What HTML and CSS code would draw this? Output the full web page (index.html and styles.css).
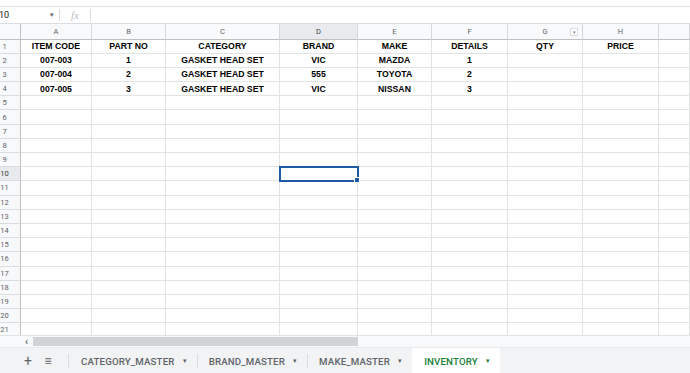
FILE: index.html
```html
<!DOCTYPE html>
<html lang="en">
<head>
  <meta charset="UTF-8" />
  <title>INVENTORY - Sheet</title>
  <link rel="stylesheet" href="styles.css">
</head>
<body>
  <div class="topstrip"></div>

  <div class="formula-bar">
    <div class="name-box">
      <span class="cell-ref">10</span>
      <span class="caret">&#9662;</span>
    </div>
    <div class="fx">fx</div>
    <div class="formula-input"></div>
  </div>

  <div class="grid-wrap">
    <div class="sheet" id="sheet"></div>
  </div>

  <div class="hscroll">
    <span class="scroll-arrow">&lsaquo;</span>
    <div class="scroll-track"><div class="scroll-thumb"></div></div>
  </div>

  <div class="tabbar">
    <span class="tab-btn">+</span>
    <span class="tab-btn menu">&#8801;</span>
    <span class="tab-sep"></span>
    <div class="tab"><span>CATEGORY_MASTER</span><span class="tab-caret">&#9662;</span></div>
    <div class="tab"><span>BRAND_MASTER</span><span class="tab-caret">&#9662;</span></div>
    <div class="tab"><span>MAKE_MASTER</span><span class="tab-caret">&#9662;</span></div>
    <div class="tab active"><span>INVENTORY</span><span class="tab-caret">&#9662;</span></div>
  </div>

  <script>
    const cols = ['A','B','C','D','E','F','G','H',''];
    const data = [
      ['ITEM CODE','PART NO','CATEGORY','BRAND','MAKE','DETAILS','QTY','PRICE'],
      ['007-003','1','GASKET HEAD SET','VIC','MAZDA','1','',''],
      ['007-004','2','GASKET HEAD SET','555','TOYOTA','2','',''],
      ['007-005','3','GASKET HEAD SET','VIC','NISSAN','3','','']
    ];
    const rowCount = 21;
    const selRow = 10, selCol = 3; // D10

    const sheet = document.getElementById('sheet');
    let html = '<div class="corner"></div>';
    cols.forEach((c, i) => {
      const cls = i === selCol ? 'col-head picked' : 'col-head';
      const filter = c === 'G' ? '<span class="filter">&#9662;</span>' : '';
      html += `<div class="${cls}">${c}${filter}</div>`;
    });
    for (let r = 1; r <= rowCount; r++) {
      const cls = r === selRow ? 'row-head picked' : 'row-head';
      html += `<div class="${cls}"><span>${r}</span></div>`;
      cols.forEach((c, i) => {
        const val = (data[r-1] && data[r-1][i]) || '';
        const sel = (r === selRow && i === selCol) ? ' selected' : '';
        html += `<div class="cell${sel}">${val}</div>`;
      });
    }
    sheet.innerHTML = html;
  </script>
</body>
</html>
```

FILE: styles.css
```css
body {
  margin: 0;
  width: 690px;
  height: 373px;
  overflow: hidden;
  background: #fff;
  font-family: Roboto, "Liberation Sans", sans-serif;
}
.topstrip {
  height: 6px;
  border-bottom: 1px solid #e3e3e3;
}
.formula-bar {
  display: flex;
  align-items: center;
  height: 16px;
  border-bottom: 1px solid #dadce0;
}
.name-box {
  width: 60px;
  display: flex;
  align-items: center;
  justify-content: space-between;
  padding-right: 5px;
  box-sizing: border-box;
  border-right: 1px solid #dadce0;
  height: 12px;
}
.cell-ref {
  font-size: 9px;
  color: #202124;
  margin-left: -1px;
}
.caret {
  font-size: 7px;
  color: #5f6368;
}
.fx {
  width: 30px;
  text-align: center;
  font-family: "Liberation Serif", serif;
  font-style: italic;
  font-size: 11px;
  color: #bdc1c6;
  border-right: 1px solid #dadce0;
  height: 12px;
  line-height: 12px;
}
.grid-wrap {
  height: 311px;
  overflow: hidden;
}
.sheet {
  display: grid;
  grid-template-columns: 21px 71px 74px 114px 78px 74px 76px 75px 76px 1fr;
  grid-template-rows: 15.5px repeat(21, 14.2px);
}
.corner, .col-head, .row-head {
  background: #f8f9fa;
  color: #5f6368;
  font-size: 7.5px;
  box-sizing: border-box;
}
.corner {
  border-right: 1px solid #c0c0c0;
  border-bottom: 1px solid #c0c0c0;
}
.col-head {
  display: flex;
  align-items: center;
  justify-content: center;
  position: relative;
  border-right: 1px solid #d5d7da;
  border-bottom: 1px solid #c0c0c0;
}
.row-head {
  display: flex;
  align-items: center;
  padding-right: 11px;
  justify-content: center;
  border-right: 1px solid #c0c0c0;
  border-bottom: 1px solid #dadce0;
}
.picked {
  background: #e8eaed;
  color: #3c4043;
}
.filter {
  position: absolute;
  right: 4px;
  top: 4px;
  width: 6px;
  height: 6px;
  border: 1px solid #dadce0;
  font-size: 5px;
  line-height: 6px;
  text-align: center;
  color: #80868b;
  background: #fff;
}
.cell {
  box-sizing: border-box;
  border-right: 1px solid #e2e3e3;
  border-bottom: 1px solid #e2e3e3;
  font-family: "Liberation Sans", Arial, sans-serif;
  font-weight: bold;
  font-size: 8.7px;
  color: #000;
  display: flex;
  align-items: center;
  justify-content: center;
  white-space: nowrap;
  position: relative;
}
.cell.selected {
  outline: 2px solid #1f5aa6;
  outline-offset: -1px;
  z-index: 1;
}
.cell.selected::after {
  content: "";
  position: absolute;
  right: -3px;
  bottom: -3px;
  width: 4px;
  height: 4px;
  background: #1f5aa6;
  border: 1px solid #fff;
}
.hscroll {
  display: flex;
  align-items: center;
  height: 11px;
  background: #f8f9fa;
  border-top: 1px solid #e2e3e3;
}
.scroll-arrow {
  width: 33px;
  padding-left: 25px;
  box-sizing: border-box;
  font-size: 10px;
  line-height: 10px;
  color: #3c4043;
}
.scroll-track {
  flex: 1;
  height: 9px;
}
.scroll-thumb {
  width: 325px;
  height: 9px;
  background: #d2d3d4;
}
.tabbar {
  display: flex;
  align-items: stretch;
  height: 27px;
  background: #f1f3f4;
  border-top: 1px solid #e8eaed;
  box-sizing: border-box;
  padding-left: 20px;
}
.tab-btn {
  display: flex;
  align-items: center;
  justify-content: center;
  width: 16px;
  margin-right: 4px;
  color: #5f6368;
  font-size: 14px;
}
.tab-btn.menu {
  font-size: 12px;
  margin-right: 0;
}
.tab-sep {
  margin: 6px 0 6px 12px;
  border-left: 1px solid #dadce0;
}
.tab {
  display: flex;
  align-items: center;
  gap: 8px;
  padding: 0 10px 0 12px;
  font-size: 9.7px;
  font-weight: 500;
  letter-spacing: 0.15px;
  color: #5f6368;
  position: relative;
}
.tab + .tab::before {
  content: "";
  position: absolute;
  left: 0;
  top: 6px;
  bottom: 6px;
  border-left: 1px solid #dadce0;
}
.tab-caret {
  font-size: 7px;
}
.tab.active {
  background: #fff;
  color: #188038;
}
.tab.active::before, .tab.active + .tab::before {
  display: none;
}
```
